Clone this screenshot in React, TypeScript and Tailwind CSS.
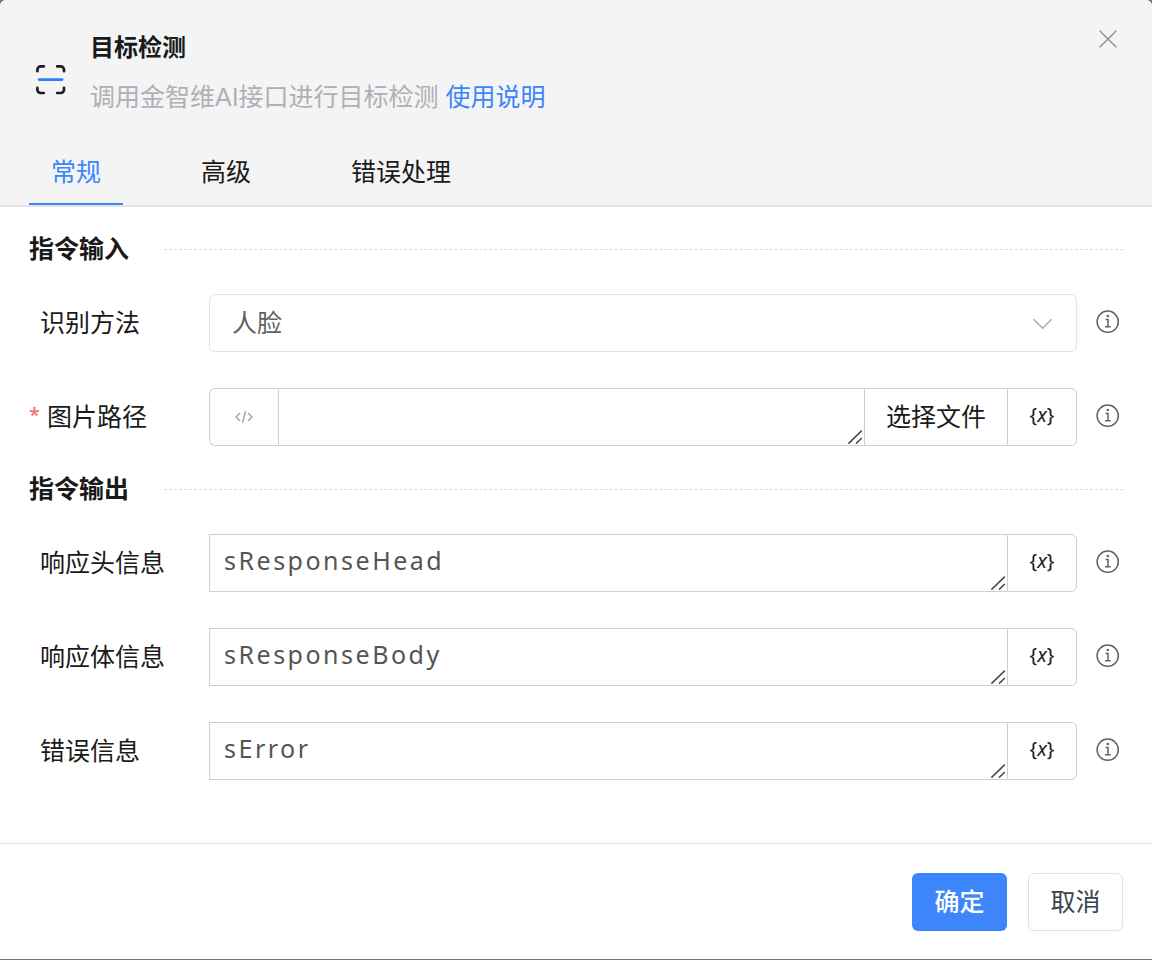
import React, { useState } from "react";
import clsx from "clsx";

const tabs = ["常规", "高级", "错误处理"];

const outputs = [
  { id: "head", label: "响应头信息", value: "sResponseHead" },
  { id: "body", label: "响应体信息", value: "sResponseBody" },
  { id: "error", label: "错误信息", value: "sError" },
];

const ScanIcon = () => (
  <svg width="30" height="30" viewBox="0 0 30 30" fill="none" strokeLinecap="round" aria-hidden="true">
    <g stroke="#1b1b29" strokeWidth="2.7">
      <path d="M1.4 6.2V4.7a3.3 3.3 0 0 1 3.3-3.3h3.1" />
      <path d="M21.2 1.4h3.5a3.3 3.3 0 0 1 3.3 3.3v1.5" />
      <path d="M28 22.8v1.9a3.3 3.3 0 0 1-3.3 3.3h-3.5" />
      <path d="M7.8 28H4.7a3.3 3.3 0 0 1-3.3-3.3v-1.9" />
    </g>
    <path d="M3.2 14.6h22.8" stroke="#2b7fff" strokeWidth="2.8" />
  </svg>
);

const CloseIcon = () => (
  <svg width="18" height="18" viewBox="0 0 18 18" stroke="#909399" strokeWidth="1.5" aria-hidden="true">
    <path d="M.7.7l16.6 16.6M17.3.7L.7 17.3" />
  </svg>
);

const InfoIcon = () => (
  <svg width="24" height="24" viewBox="0 0 24 24" fill="none" stroke="#606266" strokeWidth="1.5" aria-hidden="true">
    <circle cx="11.7" cy="11.7" r="10.6" />
    <path d="M9.6 9.4h2.4v7.2M9 16.7h5.6" />
    <circle cx="11.8" cy="6" r="1.3" fill="#606266" stroke="none" />
  </svg>
);

const CodeIcon = () => (
  <svg width="18" height="14" viewBox="0 0 18 14" fill="none" stroke="#a0a0a8" strokeWidth="1.4" aria-hidden="true">
    <path d="M5 3L1 7l4 4M13 3l4 4-4 4M10.4 1L7.6 13" />
  </svg>
);

const Grip = () => (
  <svg
    className="pointer-events-none absolute right-px bottom-px"
    width="16"
    height="16"
    viewBox="0 0 16 16"
    stroke="#4a4a4a"
    strokeWidth="1.5"
    aria-hidden="true"
  >
    <path d="M1.4 14.6L14.8 1.6M9 14.6l5.8-5.6" />
  </svg>
);

const SectionTitle = ({ children }: { children: React.ReactNode }) => (
  <div className="mb-[27px] flex items-center gap-[35px]">
    <h2 className="font-bold">{children}</h2>
    <div className="flex-1 border-t border-dashed border-[#dcdcdc]" />
  </div>
);

type RowProps = {
  id: string;
  label: string;
  required?: boolean;
  children: React.ReactNode;
};

const Row = ({ id, label, required, children }: RowProps) => (
  <div className="flex h-[58px] items-center">
    <label htmlFor={id} className={clsx("flex w-[180px] shrink-0", !required && "pl-[11px]")}>
      {required && (
        <span className="w-[18px] font-['Open_Sans',sans-serif] text-xl leading-8 font-semibold text-[#f56c6c]">*</span>
      )}
      {label}
    </label>
    <div className="flex h-full min-w-0 flex-1">{children}</div>
    <button type="button" aria-label={`${label}说明`} className="ml-[19px] w-[27px] shrink-0 pb-0.5">
      <InfoIcon />
    </button>
  </div>
);

const VariableButton = () => (
  <button
    type="button"
    aria-label="选择变量"
    className="w-[70px] shrink-0 rounded-r-md border border-[#d0d0d0] pb-1 font-['Noto_Sans',sans-serif] text-xl"
  >
    {"{"}
    <i>x</i>
    {"}"}
  </button>
);

type AreaProps = { id: string; defaultValue?: string };

const Area = ({ id, defaultValue }: AreaProps) => (
  <div className="relative min-w-0 flex-1">
    <textarea
      id={id}
      rows={1}
      defaultValue={defaultValue}
      className="block h-full w-full resize-none overflow-hidden border border-r-0 border-[#d0d0d0] px-[14px] py-[7px] font-['Noto_Sans','Noto_Sans_CJK_SC',sans-serif] tracking-widest text-[#555] outline-none"
    />
    <Grip />
  </div>
);

const App = () => {
  const [active, setActive] = useState(tabs[0]);
  const [method, setMethod] = useState("人脸");

  return (
    <div className="min-h-screen bg-[#757575] font-['Liberation_Sans','Noto_Sans_CJK_SC',sans-serif] text-[25px] leading-9 text-[#1a1a1a]">
      <div className="overflow-hidden rounded-t-md border-b border-[#757575] bg-white">
        <header className="border-b-2 border-[#e4e4e4] bg-[#f4f4f4] px-[29px]">
          <div className="flex items-start pt-[30px]">
            <div className="mt-[35px] ml-[7px] w-[54px] shrink-0">
              <ScanIcon />
            </div>
            <div className="flex-1">
              <h1 className="text-2xl leading-9 font-bold">目标检测</h1>
              <p className="mt-[13px] text-[#b0afb8]">
                调用金智维AI接口进行目标检测{" "}
                <a href="#help" className="text-[#3d85fb]">
                  使用说明
                </a>
              </p>
            </div>
            <button type="button" aria-label="关闭" className="mr-[6px]">
              <CloseIcon />
            </button>
          </div>
          <nav className="mt-[23px] flex gap-14" role="tablist">
            {tabs.map((tab) => (
              <button
                key={tab}
                type="button"
                role="tab"
                aria-selected={tab === active}
                onClick={() => setActive(tab)}
                className={clsx(
                  "h-[67px] border-b-2 px-[22px] pt-0.5",
                  tab === active ? "border-[#3d85fb] text-[#3d85fb]" : "border-transparent"
                )}
              >
                {tab}
              </button>
            ))}
          </nav>
        </header>

        <main className="flex flex-col gap-[25px] px-[29px] pt-6 pb-[63px]">
          <section>
            <SectionTitle>指令输入</SectionTitle>
            <div className="flex flex-col gap-9">
              <Row id="method" label="识别方法">
                <div className="relative flex-1">
                  <select
                    id="method"
                    value={method}
                    onChange={(e) => setMethod(e.target.value)}
                    className="h-full w-full appearance-none rounded-md border border-[#e4e4e8] bg-white px-[22px] text-[#606266] outline-none"
                  >
                    <option>人脸</option>
                    <option>人体</option>
                  </select>
                  <svg
                    className="pointer-events-none absolute top-6 right-6"
                    width="20"
                    height="12"
                    viewBox="0 0 20 12"
                    fill="none"
                    stroke="#a8abb2"
                    strokeWidth="1.5"
                    aria-hidden="true"
                  >
                    <path d="M.6 1.2l9 9 9-9" />
                  </svg>
                </div>
              </Row>
              <Row id="path" label="图片路径" required>
                <button
                  type="button"
                  aria-label="表达式"
                  className="flex w-[69px] shrink-0 items-center justify-center rounded-l-md border border-r-0 border-[#d0d0d0]"
                >
                  <CodeIcon />
                </button>
                <Area id="path" />
                <button type="button" className="w-[143px] shrink-0 border border-r-0 border-[#d0d0d0]">
                  选择文件
                </button>
                <VariableButton />
              </Row>
            </div>
          </section>

          <section>
            <SectionTitle>指令输出</SectionTitle>
            <div className="flex flex-col gap-9">
              {outputs.map(({ id, label, value }) => (
                <Row key={id} id={id} label={label}>
                  <Area id={id} defaultValue={value} />
                  <VariableButton />
                </Row>
              ))}
            </div>
          </section>
        </main>

        <footer className="flex justify-end gap-[21px] border-t border-[#e4e4e4] px-[29px] pt-[29px] pb-7">
          <button type="button" className="h-[58px] w-[95px] rounded-md bg-[#3d85fb] font-medium text-white">
            确定
          </button>
          <button type="button" className="h-[58px] w-[95px] rounded-md border border-[#e2e2e6] text-[#3b4350]">
            取消
          </button>
        </footer>
      </div>
    </div>
  );
};

export default App;
